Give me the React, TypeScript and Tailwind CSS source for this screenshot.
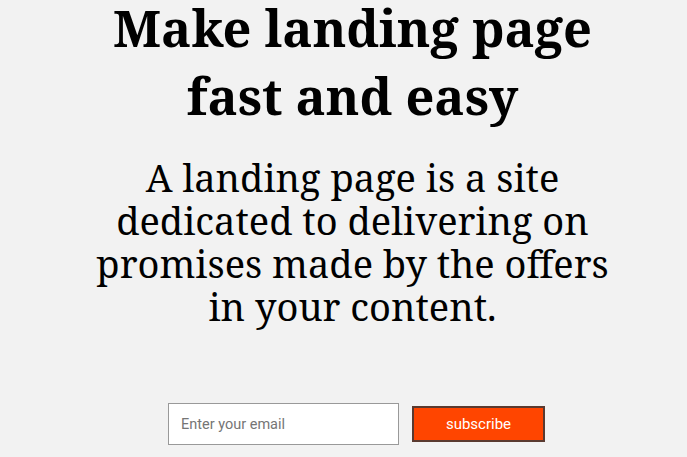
export default function App() {
  return (
    <div className="min-h-screen bg-[#f2f2f2] pl-[18px] flex flex-col items-center text-black overflow-hidden">
      <h1 className="-mt-[6px] text-center font-bold text-[50.5px] leading-[68px] font-['Noto_Serif','DejaVu_Serif',serif]">
        Make landing page
        <br />
        fast and easy
      </h1>
      <p className="mt-[26px] text-center text-[38px] leading-[43px] w-[540px] font-['Noto_Serif','DejaVu_Serif',serif]">
        A landing page is a site dedicated to delivering on promises made by the offers in your content.
      </p>
      <form className="mt-[75px] ml-[8px] flex items-center gap-[13px]" onSubmit={(e) => e.preventDefault()}>
        <input
          type="email"
          placeholder="Enter your email"
          className="w-[231px] h-[42px] bg-white border border-[#999] px-3 text-[14.5px] font-['Roboto',sans-serif] placeholder:text-[#757575] outline-none"
        />
        <button
          type="submit"
          className="w-[133px] h-[36px] bg-[#ff4500] border-2 border-[#5a3a30] text-white text-[15px] font-['Roboto',sans-serif]"
        >
          subscribe
        </button>
      </form>
    </div>
  );
}
